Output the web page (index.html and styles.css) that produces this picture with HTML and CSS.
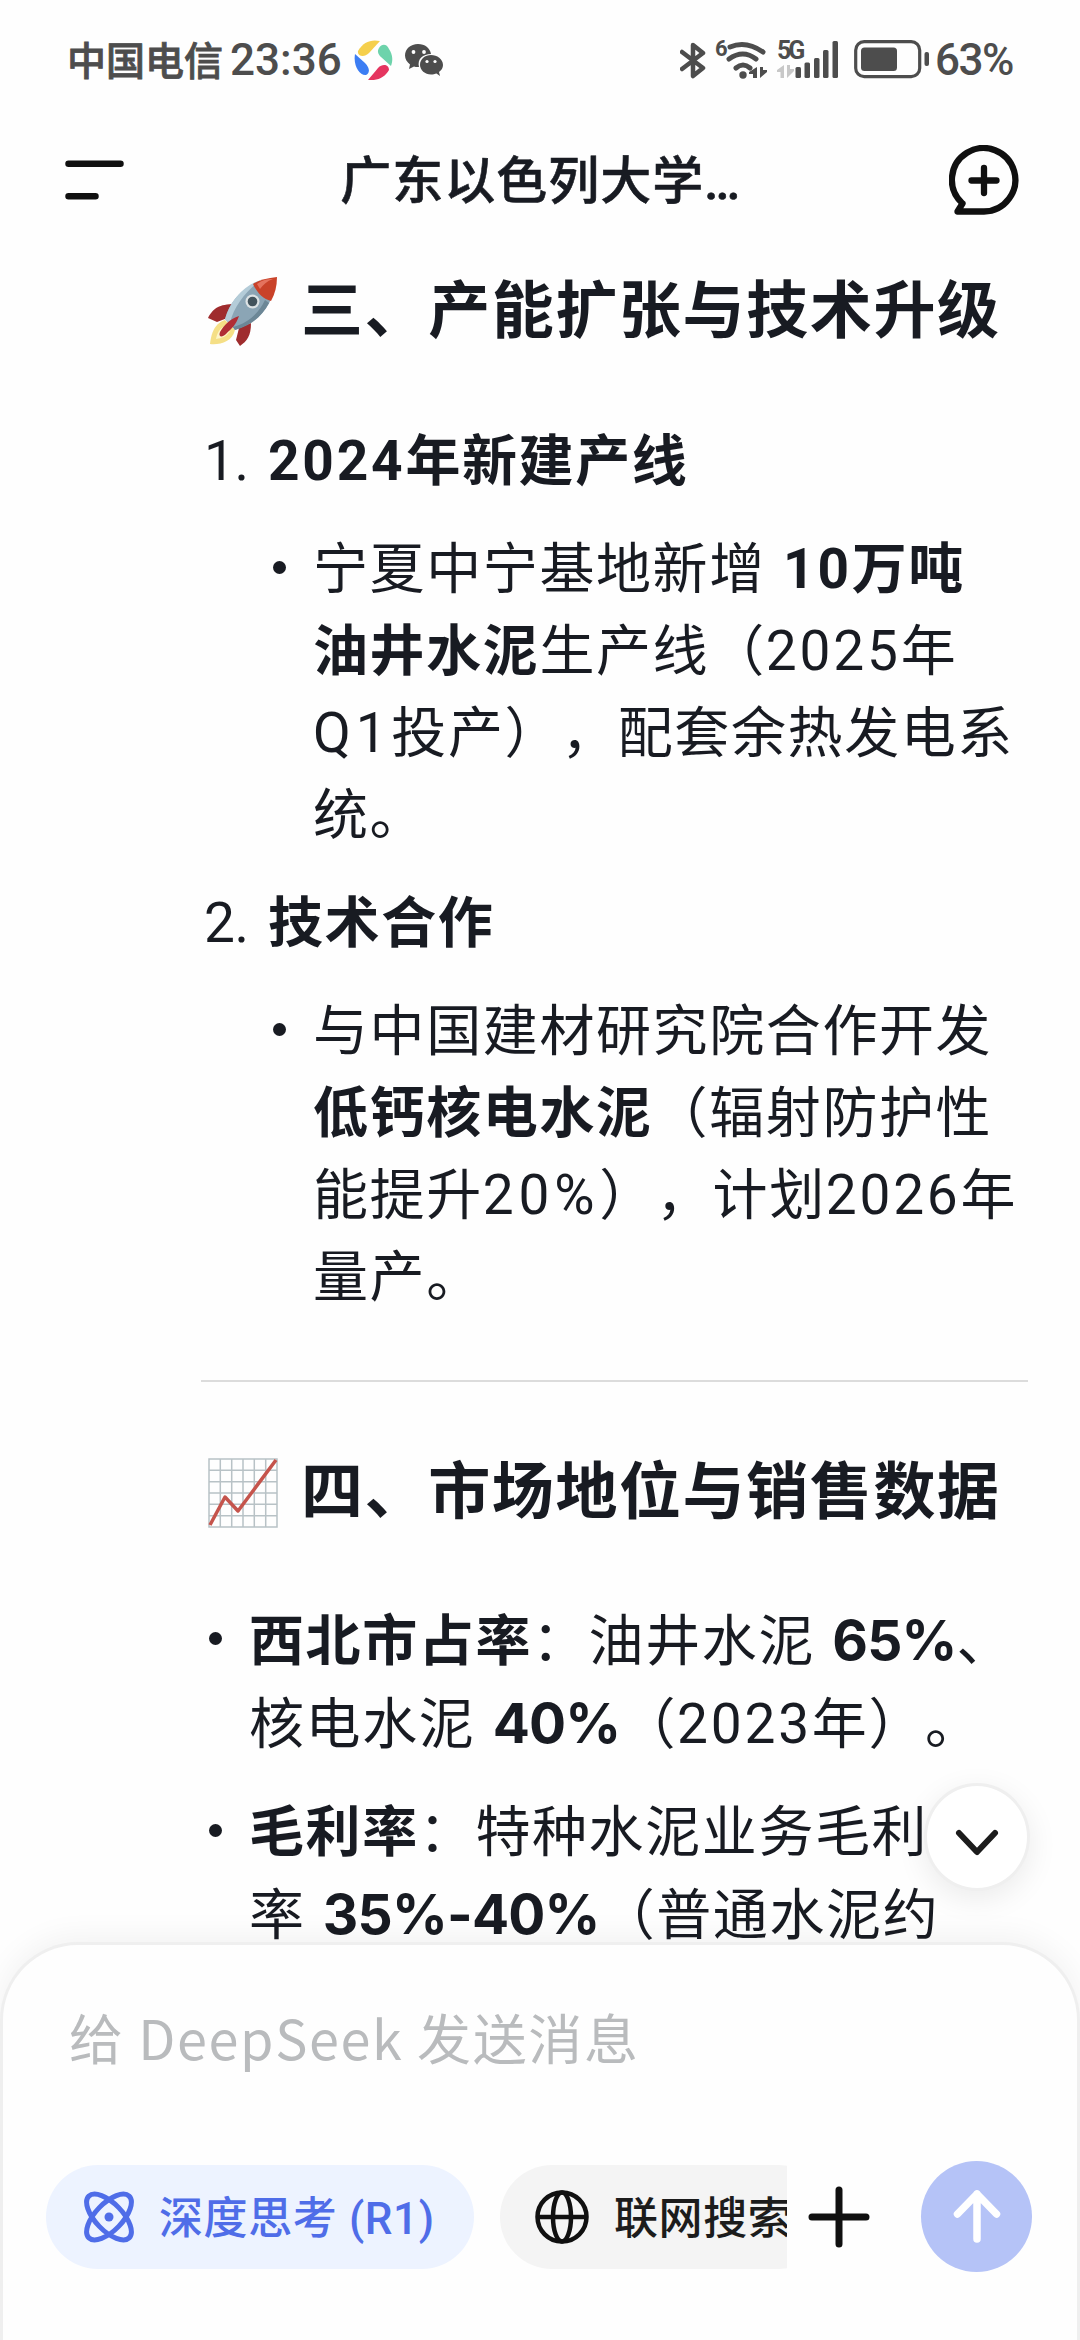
FILE: index.html
```html
<!DOCTYPE html>
<html lang="zh-CN">
  <head>
    <meta charset="UTF-8" />
    <meta name="viewport" content="width=device-width, initial-scale=1.0" />
    <title>广东以色列大学...</title>
    <link rel="stylesheet" href="styles.css">
  </head>
  <body>
    <div class="status-bar">
      <span class="carrier">中国电信</span>
      <span class="time">23:36</span>
      <svg class="app-icon" width="39" height="40" viewBox="0 0 39 40">
        <path fill="#f5cf4c" d="M4 11C9 2 17-1 26 1L15 13C10 18 3 16 4 11Z" />
        <path fill="#6dd3ab" d="M25 8C28 3 33 4 35 9C39 15 39 21 37 26L27 17C24 14 23 11 25 8Z" />
        <path fill="#e5355f" d="M14 40C17 36 20 33 24 28C29 23 35 25 35 30C31 37 24 41 14 40Z" />
        <path fill="#3c7df3" d="M1 14L11 23C16 28 16 33 12 35C6 36-1 26 1 14Z" />
      </svg>
      <svg class="wechat" width="38" height="34" viewBox="0 0 38 34" fill="#4d4d4d">
        <path d="M13 1C5.500 1 0 6 0 12.500C0 16 2 19 5 21.500L4 26L9 23.500C10.500 24 12 24.200 14 24C12 16 18 11 26 11C25 5 20 1 13 1Z" />
        <path d="M26 12C20 12 15 16 15 22C15 27 20 31.500 26 31.500C28 31.500 30 31 31.500 30.500L35 33L34 29C36.500 27 38 25 38 22C38 16 32 12 26 12Z" />
        <g fill="#fff">
          <circle cx="8.500" cy="9" r="1.900" /><circle cx="19" cy="9" r="1.900" />
          <circle cx="22" cy="18.500" r="1.600" /><circle cx="30" cy="18.500" r="1.600" />
        </g>
      </svg>
      <svg class="indicators" width="252" height="58" viewBox="0 -8 252 58">
        <g fill="none" stroke="#4d4d4d" stroke-linecap="round" stroke-linejoin="round">
          <path stroke-width="4.500" d="M2 13L23 29L13 37V6L23 14L2 30" />
          <path stroke-width="5" d="M50 8Q66 1 83 13M49 20Q63 10 76 20M56 29Q63 23 70 29" />
        </g>
        <g fill="#4d4d4d">
          <text class="wifi-gen" x="35" y="17">6</text>
          <circle cx="63" cy="36" r="3.700" />
          <path d="M77 28V39H73V35H69V33Z" />
          <path d="M80 28V39L87 33V31H83V28Z" />
          <text class="network" x="97" y="20">5G</text>
          <rect x="115.500" y="28" width="5.500" height="11" rx="1.500" />
          <rect x="124.500" y="23.500" width="5.500" height="15.500" rx="1.500" />
          <rect x="134" y="19" width="5.500" height="20" rx="1.500" />
          <rect x="143" y="11" width="5.500" height="28" rx="1.500" />
          <rect x="152.500" y="2" width="5.500" height="37" rx="1.500" />
          <rect x="181" y="8.500" width="36" height="23.500" rx="3.500" />
          <rect x="244.500" y="13" width="4.500" height="14" rx="2" />
        </g>
        <path fill="#c8c8c8" d="M104 26V39H100.500V33H97V31ZM107 26H110V30H114V32L107 39Z" />
        <rect x="175.700" y="2.700" width="64" height="35" rx="8.500" fill="none" stroke="#4d4d4d" stroke-width="3.200" />
      </svg>
      <span class="battery-level">63%</span>
    </div>

    <header class="header">
      <svg width="59" height="40" viewBox="0 0 59 40" stroke="#101010" stroke-width="6.500" stroke-linecap="round">
        <path d="M3.500 3.800H55.500M3.500 36.200H30.500" />
      </svg>
      <h1>广东以色列大学<span class="dots">...</span></h1>
      <svg width="70" height="70" viewBox="0 0 70 70" fill="none" stroke="#101010" stroke-width="6.300" stroke-linecap="round" stroke-linejoin="round">
        <path d="M13 58A31.700 31.700 0 1 1 35 66.500H8.500L13.500 58.500" />
        <path d="M35 23V48M22.500 35.500H47.500" />
      </svg>
    </header>

    <main class="answer">
      <h2>
        <svg class="emoji" width="70" height="70" viewBox="0 0 70 70">
          <path fill="#f5df86" d="M17 43C5 47 3 59 2 67C12 68 24 65 27 53Z" />
          <path fill="#fdf6c8" d="M17 49C10 52 9 58 8 62C14 61 18 60 22 54Z" />
          <path fill="#9f2c2e" d="M24 27C9 28 5 32 0 41L9 45L22 40ZM43 46C43 59 39 64 32 69L28 63L31 51Z" />
          <path fill="#8ba5b5" d="M17 42C22 24 36 5 67 1C67 30 48 46 27 53Z" />
          <path fill="#b4ccd8" d="M17 42C22 24 36 8 53 3C39 13 26 29 22 46Z" />
          <path fill="#6c8796" d="M61 26C53 41 43 48 27 53L25 50C40 46 51 36 57 23Z" />
          <path fill="#c94229" d="M45 7C51 3 59 1 69 0C69 9 67 17 63 24C55 22 49 16 45 7Z" />
          <path fill="#e4735e" d="M49 7C54 3 59 2 65 2C59 4 55 8 52 12Z" />
          <circle cx="44.500" cy="24.500" r="7" fill="#dde3e5" />
          <circle cx="44.500" cy="24.500" r="4.800" fill="#43545d" />
          <path fill="#b02d34" d="M31 39C22 42 16 48 12 55C10 60 14 61 18 57C24 51 28 48 31 39Z" />
        </svg>
        三、产能扩张与技术升级
      </h2>

      <ol class="numbered">
        <li>
          <span class="marker">1.</span><strong><span class="num">2024</span>年新建产线</strong>
          <ul>
            <li>宁夏中宁基地新增 <strong><span class="num">10</span>万吨<br>油井水泥</strong>生产线（<span class="num">2025</span>年<br><span class="num wide">Q1</span>投产），配套余热发电系<br>统。</li>
          </ul>
        </li>
        <li>
          <span class="marker">2.</span><strong>技术合作</strong>
          <ul>
            <li>与中国建材研究院合作开发<br><strong>低钙核电水泥</strong>（辐射防护性<br>能提升<span class="num wide">20%</span>），计划<span class="num">2026</span>年<br>量产。</li>
          </ul>
        </li>
      </ol>

      <hr>

      <h2>
        <svg class="emoji" width="70" height="70" viewBox="0 0 70 70" fill="none">
          <path stroke="#b8c2c6" stroke-width="1.500" d="M1 1H69V69H1ZM12.300 1V69M23.700 1V69M35 1V69M46.300 1V69M57.700 1V69M1 12.300H69M1 23.700H69M1 35H69M1 46.300H69M1 57.700H69" />
          <path stroke="#c5544c" stroke-width="3.500" stroke-linejoin="round" d="M2 67L17 39L30 53L68 2" />
        </svg>
        四、市场地位与销售数据
      </h2>

      <ul class="facts">
        <li><strong>西北市占率</strong>：油井水泥 <strong class="percent">65%</strong>、<br>核电水泥 <strong class="percent">40%</strong>（<span class="num">2023</span>年）。</li>
        <li><strong>毛利率</strong>：特种水泥业务毛利<br>率 <strong class="percent">35%-40%</strong>（普通水泥约</li>
      </ul>
    </main>

    <button class="scroll-down">
      <svg width="44" height="28" viewBox="0 0 44 28" fill="none" stroke="#1c1c1c" stroke-width="6" stroke-linecap="round" stroke-linejoin="round">
        <path d="M4 4L22 23L40 4" />
      </svg>
    </button>

    <footer class="composer">
      <div class="placeholder">给 DeepSeek 发送消息</div>
      <div class="toolbar">
        <div class="chips">
          <button class="chip active">
            <svg width="50" height="52" viewBox="0 0 50 52" fill="none" stroke="#4f6de8" stroke-width="5">
              <ellipse cx="25" cy="26" rx="29" ry="13.500" transform="rotate(46 25 26)" />
              <ellipse cx="25" cy="26" rx="29" ry="13.500" transform="rotate(-46 25 26)" />
              <circle cx="25" cy="26" r="4.500" fill="#4f6de8" stroke="none" />
            </svg>
            <span>深度思考 (R1)</span>
          </button>
          <button class="chip">
            <svg width="54" height="54" viewBox="0 0 54 54" fill="none" stroke="#101010" stroke-width="4.500">
              <circle cx="27" cy="27" r="24.500" />
              <ellipse cx="27" cy="27" rx="9" ry="24.500" />
              <path d="M2.500 27H51.500" />
            </svg>
            <span>联网搜索</span>
          </button>
        </div>
        <svg class="plus" width="62" height="62" viewBox="0 0 62 62" stroke="#101010" stroke-width="7" stroke-linecap="round">
          <path d="M31 4V58M4 31H58" />
        </svg>
        <button class="send">
          <svg width="50" height="56" viewBox="0 0 50 56" fill="none" stroke="#fff" stroke-width="7.500" stroke-linecap="round" stroke-linejoin="round">
            <path d="M25 5V50M5.500 25L25 5L44.500 25" />
          </svg>
        </button>
      </div>
    </footer>
  </body>
</html>
```
FILE: styles.css
```css
* {
  box-sizing: border-box;
}

body {
  margin: 0;
  width: 1080px;
  height: 2340px;
  position: relative;
  overflow: hidden;
  display: flex;
  flex-direction: column;
  background: #fefefe;
  color: #181b22;
  font-family: Roboto, 'Noto Sans CJK SC', sans-serif;
  text-spacing-trim: space-all;
}

svg {
  display: block;
  flex: none;
}

button {
  border: none;
  padding: 0;
  font: inherit;
  color: inherit;
}

.status-bar {
  height: 120px;
  flex: none;
  padding: 0 65px 0 67px;
  display: flex;
  align-items: center;
  color: #4d4d4d;
  font-weight: 500;
  white-space: nowrap;
}

.carrier {
  padding-bottom: 4px;
  font-size: 39px;
  -webkit-text-stroke: 0.8px;
}

.time {
  width: 122px;
  margin-left: 7px;
  font-size: 44px;
}

.app-icon {
  margin-left: 2px;
}

.wechat {
  margin-left: 12px;
}

.indicators {
  margin-left: auto;
}

.wifi-gen {
  font-size: 22px;
  font-weight: 700;
}

.network {
  font-size: 25px;
  font-weight: 700;
  letter-spacing: -3px;
}

.battery-level {
  width: 80px;
  margin-left: 3px;
  font-size: 44px;
  letter-spacing: -1.5px;
}

.header {
  height: 120px;
  flex: none;
  padding: 0 61px 0 65px;
  display: flex;
  align-items: center;
  justify-content: space-between;
}

.header h1 {
  margin: 0;
  padding: 0 0 6px 5px;
  font-size: 51px;
  font-weight: 500;
  letter-spacing: 1px;
  -webkit-text-stroke: 0.6px;
}

.dots {
  letter-spacing: -3px;
}

.answer {
  flex: 1;
  min-height: 0;
  padding: 26px 52px 0 201px;
  font-size: 55px;
  line-height: 82px;
  letter-spacing: 1.6px;
  white-space: nowrap;
}

.answer h2 {
  height: 92px;
  margin: 0 0 62px;
  display: flex;
  align-items: center;
  gap: 23px;
  font-size: 62px;
  letter-spacing: 1.6px;
}

.emoji {
  margin-left: 7px;
}

.answer ul,
.answer ol {
  margin: 0;
  padding: 0;
  list-style: none;
}

.answer li + li,
.answer .numbered ul {
  margin-top: 26px;
}

.marker {
  display: inline-block;
  width: 67px;
  padding-left: 3px;
  letter-spacing: -0.5px;
}

.num {
  letter-spacing: 2.8px;
}

.num.wide {
  letter-spacing: 4.8px;
}

.percent {
  font-family: Inter, sans-serif;
  letter-spacing: -0.8px;
}

.answer ul li {
  padding-left: 48px;
  position: relative;
  word-spacing: 2px;
}

.answer .numbered ul {
  padding-left: 64px;
}

.answer ul li::before {
  content: '';
  position: absolute;
  left: 8px;
  top: 33px;
  width: 13px;
  height: 13px;
  border-radius: 50%;
  background: #181b22;
}

.answer hr {
  height: 2px;
  margin: 62px 0 65px;
  border: none;
  background: #dcdcdc;
}

.answer .facts {
  margin-top: -2px;
}

.scroll-down {
  position: absolute;
  left: 924px;
  top: 1783px;
  width: 106px;
  height: 108px;
  display: flex;
  align-items: center;
  justify-content: center;
  padding-top: 12px;
  border: 3px solid #efefef;
  border-radius: 50%;
  background: #fff;
  box-shadow: 0 8px 30px rgba(0, 0, 0, 0.08);
}

.composer {
  height: 398px;
  flex: none;
  position: relative;
  padding: 50px 45px 0 43px;
  border: 3px solid #efefef;
  border-bottom: none;
  border-radius: 78px 78px 0 0;
  background: #fefefe;
  box-shadow: 0 -6px 30px rgba(0, 0, 0, 0.05);
}

.placeholder {
  height: 84px;
  padding-left: 23px;
  font-family: 'Noto Sans CJK SC', sans-serif;
  font-size: 54px;
  line-height: 84px;
  letter-spacing: 1.6px;
  color: #b9bbbd;
  white-space: nowrap;
}

.toolbar {
  height: 111px;
  margin-top: 82px;
  display: flex;
  align-items: center;
}

.chips {
  width: 741px;
  display: flex;
  gap: 26px;
  overflow: hidden;
}

.chip {
  height: 104px;
  flex: none;
  padding: 0 38px;
  display: flex;
  align-items: center;
  gap: 25px;
  border-radius: 52px;
  background: #f4f4f4;
  color: #1c1c1c;
  font-size: 44px;
  font-weight: 500;
  letter-spacing: 0.6px;
  white-space: nowrap;
}

.chip span {
  padding-bottom: 3px;
}

.chip:not(.active) {
  padding-left: 35px;
}

.chip.active {
  width: 428px;
  background: #edf3ff;
  color: #4f6de8;
}

.plus {
  margin-left: 21px;
}

.send {
  width: 111px;
  height: 111px;
  margin-left: auto;
  display: flex;
  align-items: center;
  justify-content: center;
  border-radius: 50%;
  background: #b5c3f7;
}
```
